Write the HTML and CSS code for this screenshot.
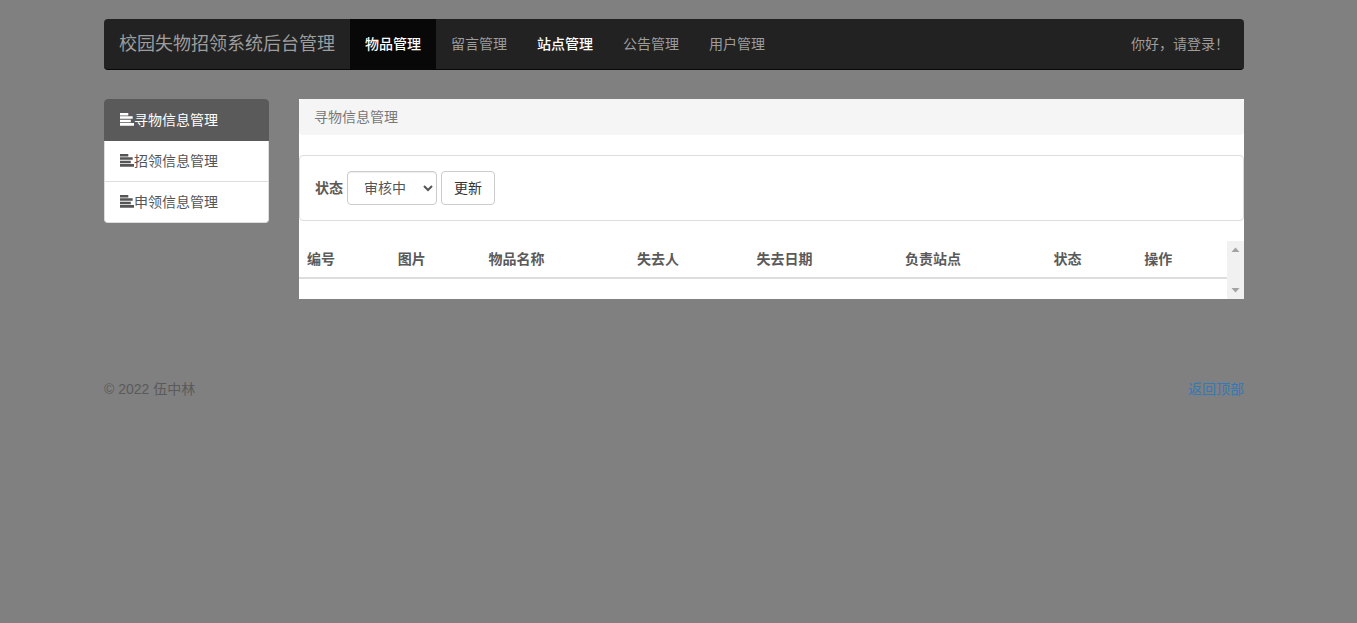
FILE: index.html
```html
<!DOCTYPE html>
<html lang="zh-CN">
<head>
<meta charset="utf-8">
<meta name="viewport" content="width=device-width, initial-scale=1">
<title>校园失物招领系统后台管理</title>
<link rel="stylesheet" href="styles.css">
</head>
<body>
<svg class="sprite" aria-hidden="true">
  <symbol id="align-left" viewBox="0 0 14 14">
    <path d="M0 0h8.300v2.500H0zM0 3.300h12.700v2.500H0zM0 6.700h10.800v2.500H0zM0 10h14v2.700H0z"/>
  </symbol>
</svg>
<div class="container">
  <nav class="navbar">
    <a class="brand" href="#">校园失物招领系统后台管理</a>
    <ul class="nav">
      <li><a class="active" href="#">物品管理</a></li>
      <li><a href="#">留言管理</a></li>
      <li><a class="hover" href="#">站点管理</a></li>
      <li><a href="#">公告管理</a></li>
      <li><a href="#">用户管理</a></li>
    </ul>
    <p class="greeting">你好，请登录！</p>
  </nav>

  <div class="layout">
    <aside class="list-group">
      <a class="item active" href="#"><svg class="icon" aria-hidden="true"><use href="#align-left"/></svg>寻物信息管理</a>
      <a class="item" href="#"><svg class="icon" aria-hidden="true"><use href="#align-left"/></svg>招领信息管理</a>
      <a class="item" href="#"><svg class="icon" aria-hidden="true"><use href="#align-left"/></svg>申领信息管理</a>
    </aside>

    <main class="content">
      <ol class="breadcrumb"><li>寻物信息管理</li></ol>
      <form class="filter">
        <label for="status">状态</label>
        <select id="status" class="control">
          <option>审核中</option>
        </select>
        <button class="btn" type="button">更新</button>
      </form>
      <div class="table-scroll">
        <table class="table">
          <thead>
            <tr>
              <th>编号</th>
              <th>图片</th>
              <th>物品名称</th>
              <th>失去人</th>
              <th>失去日期</th>
              <th>负责站点</th>
              <th>状态</th>
              <th>操作</th>
            </tr>
          </thead>
          <tbody></tbody>
        </table>
        <div class="scrollbar" aria-hidden="true">
          <svg class="arrow" viewBox="0 0 17 17"><path d="M4.500 11h8L8.500 6.500z"/></svg>
          <svg class="arrow" viewBox="0 0 17 17"><path d="M4.500 6h8l-4 4.500z"/></svg>
        </div>
      </div>
    </main>
  </div>

  <footer class="footer">
    <p>© 2022 伍中林</p>
    <a href="#">返回顶部</a>
  </footer>
</div>
</body>
</html>
```

FILE: styles.css
```css
* {
  box-sizing: border-box;
}

body {
  margin: 0;
  padding: 19px 9px 20px 0;
  background: #808080;
  color: #5a5a5a;
  font-family: "Liberation Sans", "Noto Sans CJK SC", sans-serif;
  font-size: 14px;
  line-height: 20px;
}

a {
  color: inherit;
  text-decoration: none;
}

ul,
ol,
p {
  margin: 0;
  padding: 0;
  list-style: none;
}

.sprite {
  display: none;
}

.container {
  max-width: 1170px;
  margin: 0 auto;
  padding: 0 15px;
}

.navbar {
  display: flex;
  align-items: center;
  border: 1px solid #080808;
  border-width: 0 0 1px;
  border-radius: 4px;
  background: #222;
  color: #9d9d9d;
}

.brand {
  padding: 15px;
  font-size: 18px;
}

.nav {
  display: flex;
}

.nav a {
  display: block;
  padding: 15px;
}

.nav .active {
  background: #080808;
  color: #fff;
  font-weight: 500;
}

.nav .hover {
  color: #fff;
  font-weight: 500;
}

.greeting {
  margin-left: auto;
  padding: 15px;
}

.layout {
  display: flex;
  align-items: flex-start;
  gap: 30px;
  margin-top: 29px;
}

.list-group {
  flex: 0 0 165px;
  color: #555;
}

.item {
  display: flex;
  align-items: center;
  padding: 10px 15px;
  border: 1px solid #ddd;
  border-top: 0;
  background: #fff;
}

.item:first-child {
  border-top: 1px solid #ddd;
  border-radius: 4px 4px 0 0;
}

.item:last-child {
  border-radius: 0 0 4px 4px;
}

.item.active {
  border-color: #5a5a5a;
  background: #5a5a5a;
  color: #fff;
}

.icon {
  width: 14px;
  height: 14px;
  fill: currentColor;
}

.content {
  flex: 1;
  background: #fff;
}

.breadcrumb {
  padding: 8px 15px;
  border-radius: 4px;
  background: #f5f5f5;
  color: #777;
}

.filter {
  display: flex;
  align-items: center;
  gap: 4px;
  margin: 20px 0;
  padding: 15px;
  border: 1px solid #ddd;
  border-radius: 4px;
}

.filter label {
  font-weight: 700;
}

.control,
.btn {
  height: 34px;
  padding: 6px 12px;
  border: 1px solid #ccc;
  border-radius: 4px;
  background: #fff;
  font: inherit;
}

.control {
  width: 90px;
  color: #555;
  box-shadow: inset 0 1px 1px rgba(0, 0, 0, 0.075);
}

.btn {
  color: #333;
}

.table-scroll {
  display: flex;
}

.table {
  flex: 1;
  margin-bottom: 20px;
  border-collapse: collapse;
}

.table th {
  padding: 8px;
  border-bottom: 2px solid #ddd;
  text-align: left;
  vertical-align: bottom;
  font-weight: 700;
}

.scrollbar {
  display: flex;
  flex: 0 0 17px;
  flex-direction: column;
  justify-content: space-between;
  background: #f1f1f1;
}

.arrow {
  width: 17px;
  height: 17px;
  fill: #a3a3a3;
}

.footer {
  display: flex;
  justify-content: space-between;
  margin-top: 80px;
}

.footer a {
  color: #337ab7;
}
```
